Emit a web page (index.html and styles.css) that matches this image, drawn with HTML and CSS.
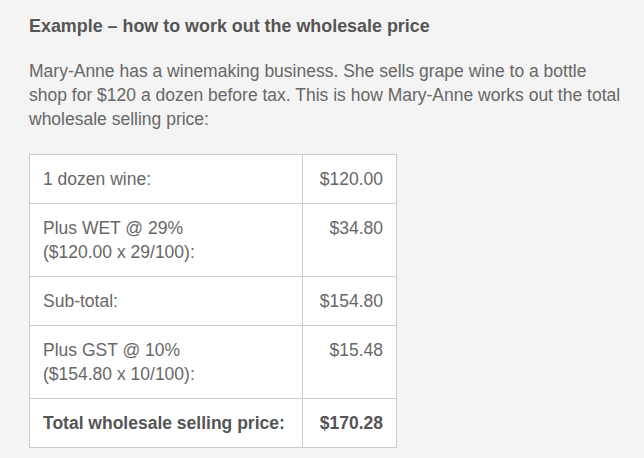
FILE: index.html
```html
<!DOCTYPE html>
<html lang="en">
<head>
    <meta charset="UTF-8">
    <title>Example – how to work out the wholesale price</title>
    <link rel="stylesheet" href="styles.css">
</head>
<body>
    <div class="example">
        <h3>Example – how to work out the wholesale price</h3>
        <p>Mary-Anne has a winemaking business. She sells grape wine to a bottle shop for $120 a dozen before tax. This is how Mary-Anne works out the total wholesale selling price:</p>
        <table class="calc">
            <tr>
                <td>1 dozen wine:</td>
                <td class="amount">$120.00</td>
            </tr>
            <tr>
                <td>Plus WET @ 29%<br>($120.00 x 29/100):</td>
                <td class="amount">$34.80</td>
            </tr>
            <tr>
                <td>Sub-total:</td>
                <td class="amount">$154.80</td>
            </tr>
            <tr>
                <td>Plus GST @ 10%<br>($154.80 x 10/100):</td>
                <td class="amount">$15.48</td>
            </tr>
            <tr class="total">
                <td>Total wholesale selling price:</td>
                <td class="amount">$170.28</td>
            </tr>
        </table>
    </div>
</body>
</html>
```

FILE: styles.css
```css
* {
    margin: 0;
    padding: 0;
    box-sizing: border-box;
}
body {
    font-family: 'Liberation Sans', Arial, sans-serif;
    background-color: #f4f4f4;
    color: #676767;
    font-size: 17.5px;
    line-height: 24px;
}
.example {
    padding: 14px 29px 0;
}
.example h3 {
    font-size: 17.9px;
    font-weight: bold;
    color: #555;
    margin-bottom: 21px;
}
.example p {
    width: 592px;
    margin-bottom: 23px;
}
.calc {
    border-collapse: collapse;
    background-color: #fff;
    width: 368px;
}
.calc td {
    border: 1px solid #ccc;
    padding: 12px 13px;
    vertical-align: top;
}
.calc td.amount {
    text-align: right;
    width: 94px;
}
.calc tr.total td {
    font-weight: bold;
    color: #555;
    white-space: nowrap;
}
```
